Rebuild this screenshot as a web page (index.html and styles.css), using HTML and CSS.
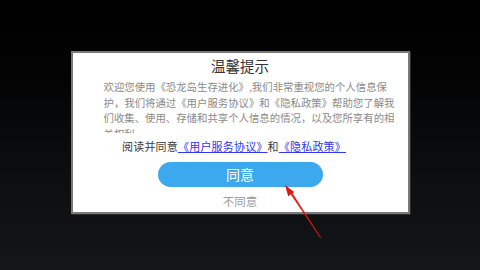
FILE: index.html
```html
<!DOCTYPE html>
<html lang="zh">
<head>
<meta charset="utf-8">
<link rel="stylesheet" href="styles.css">
</head>
<body>
<div class="screen">
  <div class="dialog">
    <div class="title">温馨提示</div>
    <div class="content">
      <p class="line">欢迎您使用《恐龙岛生存进化》,我们非常重视您的个人信息保</p>
      <p class="line">护，我们将通过《用户服务协议》和《隐私政策》帮助您了解我</p>
      <p class="line">们收集、使用、存储和共享个人信息的情况，以及您所享有的相</p>
      <p class="line last">关权利。</p>
    </div>
    <div class="agree-line">阅读并同意<a class="link" href="#">《用户服务协议》</a>和<a class="link" href="#">《隐私政策》</a></div>
    <button class="btn-agree">同意</button>
    <div class="disagree">不同意</div>
  </div>
  <svg class="arrow" width="480" height="270" viewBox="0 0 480 270">
    <path d="M320.5 237.5 L289.5 192 L290.8 191.2 Z" fill="#e3150f" stroke="#e3150f" stroke-width="0.8" stroke-linejoin="round"/>
    <polygon points="285,185 294.2,192.1 288.2,196.2" fill="#e3150f"/>
  </svg>
</div>
</body>
</html>
```
FILE: styles.css
```css
* { box-sizing: border-box; }
html, body { margin: 0; padding: 0; }
body {
  width: 480px;
  height: 270px;
  overflow: hidden;
  font-family: "Noto Sans CJK SC", "Noto Sans", sans-serif;
}
.screen {
  position: relative;
  width: 480px;
  height: 270px;
  background: linear-gradient(180deg, #000000 0%, #040405 30%, #0d0f11 70%, #131619 100%);
  display: flex;
  flex-direction: column;
  align-items: center;
  padding-top: 51px;
}
.dialog {
  width: 339px;
  height: 163px;
  background: #ffffff;
  border: 2px solid #7a7a7a;
  box-shadow: 1px 1px 0 #2a2a2a;
  display: flex;
  flex-direction: column;
  align-items: center;
  padding: 2px 0 0 0;
}
.title {
  font-size: 14.5px;
  line-height: 22px;
  color: #333333;
  height: 22px;
}
.content {
  margin-top: 2px;
  width: 100%;
  height: 54px;
  overflow: hidden;
  padding: 0 31px;
  color: #8a8a8a;
  font-size: 10.4px;
}
.line {
  margin: 0;
  line-height: 15.5px;
  height: 15.5px;
  text-align: justify;
  text-align-last: justify;
  white-space: nowrap;
}
.line.last { text-align-last: left; }
.agree-line {
  margin-top: 5px;
  font-size: 11px;
  line-height: 16px;
  height: 16px;
  color: #3a3a3a;
  letter-spacing: 0.2px;
  padding-right: 12px;
}
.link {
  color: #3434f2;
  text-decoration: underline;
}
.btn-agree {
  margin-top: 8px;
  width: 165px;
  height: 25px;
  border: none;
  border-radius: 13px;
  background: #3ca9ee;
  color: #ffffff;
  font-family: "Noto Sans CJK SC", "Noto Sans", sans-serif;
  font-size: 14px;
  line-height: 25px;
  padding: 0;
}
.disagree {
  margin-top: 6px;
  font-size: 11.5px;
  line-height: 16px;
  color: #9a9a9a;
}
.arrow {
  position: absolute;
  left: 0;
  top: 0;
  pointer-events: none;
}
```
